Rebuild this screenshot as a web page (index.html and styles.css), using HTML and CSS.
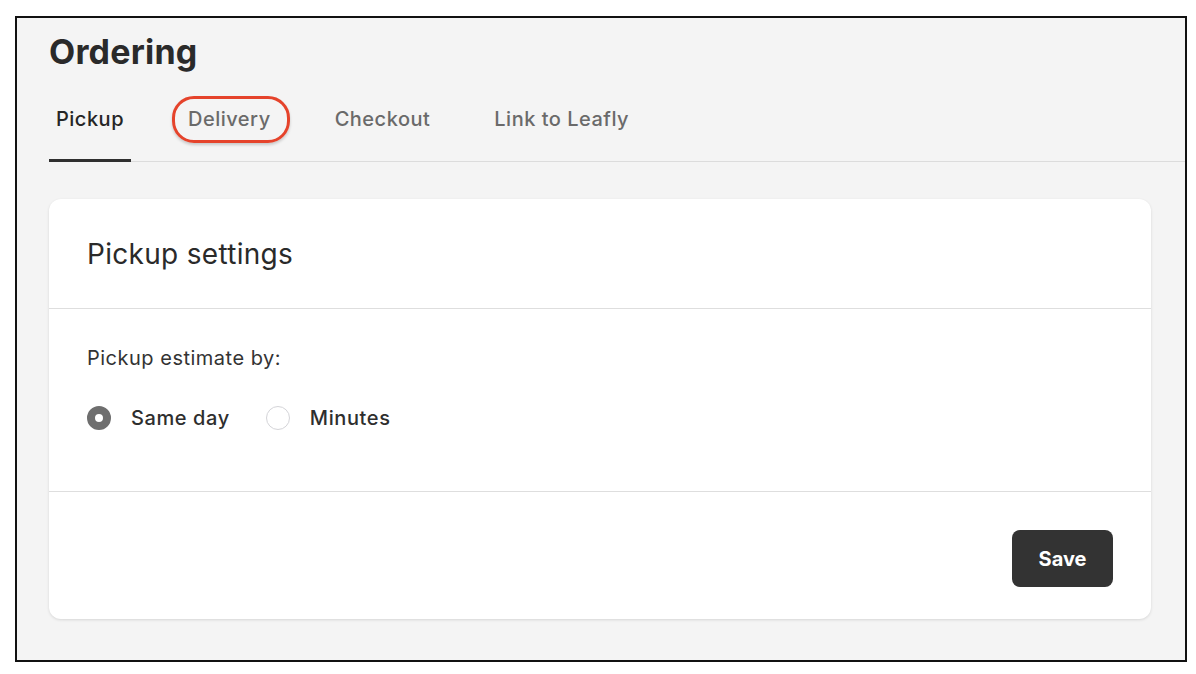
FILE: index.html
```html
<!DOCTYPE html>
<html>
<head>
<meta charset="utf-8">
<link rel="stylesheet" href="styles.css">
</head>
<body>
<div class="frame">
  <h1 class="title">Ordering</h1>
  <nav class="tabs">
    <div class="tab active">Pickup</div>
    <div class="tab"><span class="highlight">Delivery</span></div>
    <div class="tab">Checkout</div>
    <div class="tab">Link to Leafly</div>
  </nav>
  <section class="card">
    <header class="card-header">Pickup settings</header>
    <div class="card-body">
      <div class="field-label">Pickup estimate by:</div>
      <div class="radios">
        <label class="radio"><span class="dot checked"></span><span>Same day</span></label>
        <label class="radio"><span class="dot"></span><span>Minutes</span></label>
      </div>
    </div>
    <footer class="card-footer">
      <button class="save">Save</button>
    </footer>
  </section>
</div>
</body>
</html>
```

FILE: styles.css
```css
* { box-sizing: border-box; }
html, body { margin: 0; padding: 0; background: #ffffff; }
body { font-family: Inter, "Noto Sans", sans-serif; color: #2e2e2e; }

.frame {
  margin: 16px 0 0 15px;
  width: 1172px;
  height: 646px;
  border: 2px solid #111;
  background: #f4f4f4;
  padding: 12px 0 0 32px;
  overflow: hidden;
}

.title {
  margin: 0;
  font-size: 34px;
  line-height: 44px;
  font-weight: 700;
  color: #2a2a2a;
  letter-spacing: 0.2px;
}

.tabs {
  display: flex;
  gap: 50px;
  margin-top: 33px;
  border-bottom: 1px solid #dcdcdc;
}
.tab {
  padding: 0 7px 28px;
  font-size: 20px;
  line-height: 24px;
  font-weight: 500;
  color: #6a6a6a;
  letter-spacing: 0.5px;
  border-bottom: 3px solid transparent;
  margin-bottom: -1px;
}
.tab.active { color: #252525; border-bottom-color: #2f2f2f; }

.highlight { position: relative; }
.highlight::after {
  content: "";
  position: absolute;
  left: -16px;
  right: -19px;
  top: -11px;
  bottom: -12px;
  border: 3px solid #e5432b;
  border-radius: 22px;
  box-shadow: 0 2px 3px rgba(0,0,0,0.18);
}

.card {
  margin: 37px 34px 0 0;
  background: #fff;
  border-radius: 12px;
  box-shadow: 0 1px 3px rgba(0,0,0,0.12);
}
.card-header {
  height: 110px;
  display: flex;
  align-items: center;
  padding: 0 38px;
  font-size: 28px;
  font-weight: 400;
  letter-spacing: 0.3px;
  color: #2a2a2a;
  border-bottom: 1px solid #dedede;
}
.card-body {
  padding: 36px 38px 60px;
  border-bottom: 1px solid #dedede;
}
.field-label {
  font-size: 20px;
  line-height: 26px;
  letter-spacing: 0.5px;
  color: #333;
}
.radios {
  display: flex;
  gap: 36px;
  margin-top: 34px;
}
.radio {
  display: flex;
  align-items: center;
  gap: 20px;
  font-size: 20px;
  line-height: 26px;
  font-weight: 500;
  letter-spacing: 0.6px;
  color: #2e2e2e;
}
.dot {
  width: 24px;
  height: 24px;
  border-radius: 50%;
  border: 1px solid #d4d4d8;
  background: #fff;
}
.dot.checked {
  border: 8px solid #6e6e6e;
  background: #fff;
}

.card-footer {
  display: flex;
  justify-content: flex-end;
  padding: 38px 38px 32px;
}
.save {
  width: 101px;
  height: 57px;
  border: none;
  border-radius: 8px;
  background: #333333;
  color: #fff;
  font-family: Inter, "Noto Sans", sans-serif;
  font-size: 20px;
  font-weight: 700;
}
```
